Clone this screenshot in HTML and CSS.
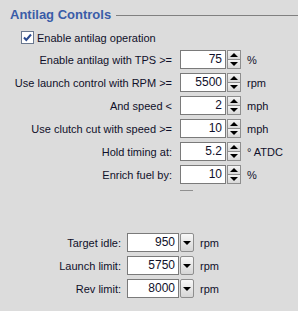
FILE: index.html
```html
<!DOCTYPE html>
<html lang="en">
<head>
    <meta charset="UTF-8">
    <title>Antilag Controls</title>
    <link rel="stylesheet" href="styles.css">
</head>
<body>
    <div class="panel">
        <div class="group-head">
            <span class="group-title">Antilag Controls</span>
            <span class="group-rule"></span>
        </div>

        <div class="check-row">
            <span class="checkbox">
                <svg width="11" height="11" viewBox="0 0 11 11"><path d="M2 5.5 L4.3 8 L9 2.5" fill="none" stroke="#2b4a8f" stroke-width="2"/></svg>
            </span>
            <span>Enable antilag operation</span>
        </div>

        <div class="spin-grid">
            <span class="lbl">Enable antilag with TPS &gt;=</span>
            <div class="spin"><span class="spin-val">75</span><span class="spin-btns"><span class="btn"><i class="up"></i></span><span class="btn"><i class="down"></i></span></span></div>
            <span class="unit">%</span>

            <span class="lbl">Use launch control with RPM &gt;=</span>
            <div class="spin"><span class="spin-val">5500</span><span class="spin-btns"><span class="btn"><i class="up"></i></span><span class="btn"><i class="down"></i></span></span></div>
            <span class="unit">rpm</span>

            <span class="lbl">And speed &lt;</span>
            <div class="spin"><span class="spin-val">2</span><span class="spin-btns"><span class="btn"><i class="up"></i></span><span class="btn"><i class="down"></i></span></span></div>
            <span class="unit">mph</span>

            <span class="lbl">Use clutch cut with speed &gt;=</span>
            <div class="spin"><span class="spin-val">10</span><span class="spin-btns"><span class="btn"><i class="up"></i></span><span class="btn"><i class="down"></i></span></span></div>
            <span class="unit">mph</span>

            <span class="lbl">Hold timing at:</span>
            <div class="spin"><span class="spin-val">5.2</span><span class="spin-btns"><span class="btn"><i class="up"></i></span><span class="btn"><i class="down"></i></span></span></div>
            <span class="unit">° ATDC</span>

            <span class="lbl">Enrich fuel by:</span>
            <div class="spin"><span class="spin-val">10</span><span class="spin-btns"><span class="btn"><i class="up"></i></span><span class="btn"><i class="down"></i></span></span></div>
            <span class="unit">%</span>
        </div>

        <div class="stub"></div>

        <div class="combo-grid">
            <span class="lbl">Target idle:</span>
            <div class="combo"><span class="combo-val">950</span><span class="combo-btn"><i class="down"></i></span></div>
            <span class="unit">rpm</span>

            <span class="lbl">Launch limit:</span>
            <div class="combo"><span class="combo-val">5750</span><span class="combo-btn"><i class="down"></i></span></div>
            <span class="unit">rpm</span>

            <span class="lbl">Rev limit:</span>
            <div class="combo"><span class="combo-val">8000</span><span class="combo-btn"><i class="down"></i></span></div>
            <span class="unit">rpm</span>
        </div>
    </div>
</body>
</html>
```

FILE: styles.css
```css
body {
    margin: 0;
    padding: 0;
    background: #dcdcdc;
    font-family: "Liberation Sans", Arial, sans-serif;
    font-size: 11px;
    color: #10102a;
}

.panel {
    width: 298px;
    height: 311px;
    padding-top: 6px;
    box-sizing: border-box;
}

.group-head {
    display: flex;
    align-items: center;
    padding-left: 10px;
    height: 16px;
}
.group-title {
    font-weight: bold;
    font-size: 13px;
    color: #3a5ca8;
}
.group-rule {
    flex: 1;
    height: 1px;
    background: #808080;
    margin-left: 5px;
    margin-top: 2px;
}

.check-row {
    display: flex;
    align-items: center;
    gap: 3px;
    margin: 8px 0 0 21px;
    height: 15px;
}
.checkbox {
    width: 11px;
    height: 11px;
    border: 1px solid #6a7890;
    background: #fff;
    display: flex;
}

.spin-grid {
    display: grid;
    grid-template-columns: 172px 61px auto;
    column-gap: 8px;
    row-gap: 4px;
    align-items: center;
    margin-top: 5px;
}
.spin-grid .unit {
    margin-left: -2px;
}

.lbl {
    text-align: right;
}

.spin,
.combo {
    display: flex;
    height: 19px;
}
.spin-val,
.combo-val {
    flex: 1;
    background: #fff;
    border: 1px solid #7a7a7a;
    text-align: right;
    padding-right: 3px;
    line-height: 17px;
    font-size: 12px;
}
.spin-btns {
    width: 14px;
    display: flex;
    flex-direction: column;
    margin-left: 1px;
}
.btn {
    flex: 1;
    border: 1px solid #8e8e8e;
    background: linear-gradient(#f4f4f4, #d8d8d8);
    display: flex;
    align-items: center;
    justify-content: center;
}
.btn + .btn {
    border-top: none;
}

.up,
.down {
    width: 0;
    height: 0;
    border-left: 4px solid transparent;
    border-right: 4px solid transparent;
}
.up {
    border-bottom: 4px solid #000;
}
.down {
    border-top: 4px solid #000;
}

.stub {
    width: 13px;
    height: 1px;
    background: #909090;
    margin: 6px 0 0 180px;
}

.combo-grid {
    display: grid;
    grid-template-columns: 121px 67px auto;
    column-gap: 6px;
    row-gap: 4px;
    align-items: center;
    margin-top: 42px;
}
.combo-btn {
    width: 12px;
    margin-left: 1px;
    border: 1px solid #8e8e8e;
    border-radius: 2px;
    background: linear-gradient(#f8f8f8, #d6d6d6);
    display: flex;
    align-items: center;
    justify-content: center;
}
```
